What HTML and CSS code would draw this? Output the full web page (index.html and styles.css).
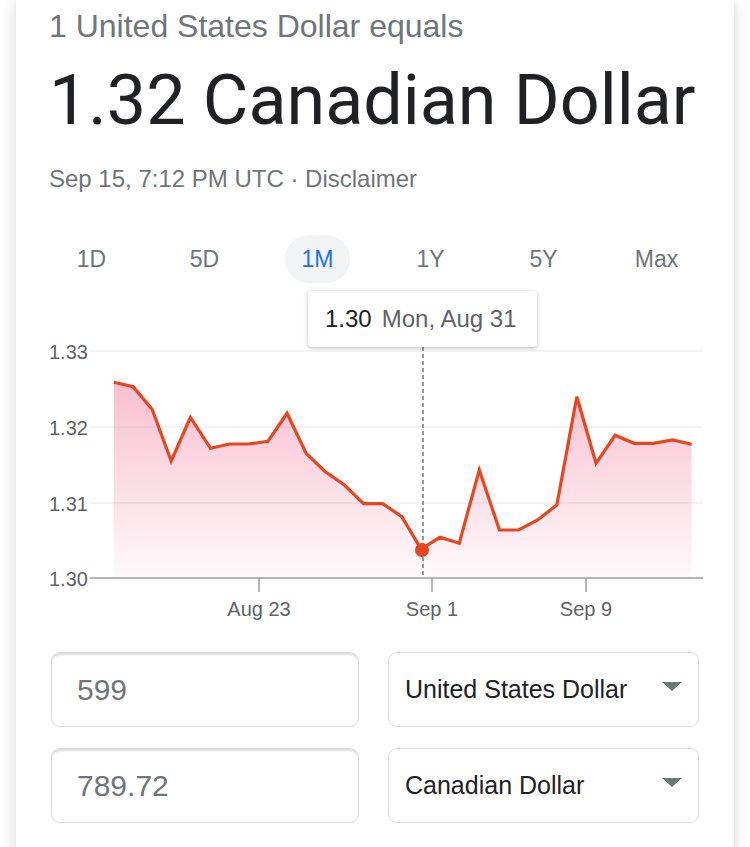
FILE: index.html
```html
<!DOCTYPE html>
<html lang="en">
<head>
    <meta charset="UTF-8">
    <meta name="viewport" content="width=device-width, initial-scale=1.0">
    <title>USD to CAD</title>
    <link rel="stylesheet" href="styles.css">
</head>
<body>
    <div class="card">
        <div class="equals">1 United States Dollar equals</div>
        <div class="rate">1.32 Canadian Dollar</div>
        <div class="updated">Sep 15, 7:12 PM UTC · Disclaimer</div>

        <!-- Range tabs -->
        <div class="tabs">
            <div class="tab"><span>1D</span></div>
            <div class="tab"><span>5D</span></div>
            <div class="tab active"><span>1M</span></div>
            <div class="tab"><span>1Y</span></div>
            <div class="tab"><span>5Y</span></div>
            <div class="tab"><span>Max</span></div>
        </div>

        <!-- Chart -->
        <div class="chart">
            <svg class="chart-svg" width="652" height="345" viewBox="49 283 652 345" overflow="visible">
                <defs>
                    <linearGradient id="fillGrad" x1="0" y1="0" x2="0" y2="1">
                        <stop offset="0" stop-color="#ec4d7c" stop-opacity="0.36"/>
                        <stop offset="1" stop-color="#ec4d7c" stop-opacity="0.03"/>
                    </linearGradient>
                </defs>

                <g class="grid">
                    <line x1="90" y1="351" x2="703" y2="351"/>
                    <line x1="90" y1="427" x2="703" y2="427"/>
                    <line x1="90" y1="503" x2="703" y2="503"/>
                </g>

                <g class="y-labels">
                    <text x="49" y="359">1.33</text>
                    <text x="49" y="435">1.32</text>
                    <text x="49" y="511">1.31</text>
                    <text x="49" y="586">1.30</text>
                </g>

                <polygon fill="url(#fillGrad)" points="113.8,382.3 133,386.7 152.1,409.3 171.2,461 190.4,417.3 210.5,448.3 229.6,444 248.7,444 267.9,441.3 287,413.3 306.1,453.3 325.3,471.7 344.4,485 363.5,503.7 382.6,503.7 401.8,516.7 421,549 440,537.3 459.2,543.3 479.3,470 499.4,530 518.5,530 537.6,520 556.8,505 576.8,396.7 596,463.3 615.1,435.3 634.2,443.3 653.4,443.3 672.5,440 691.6,444.3 691.6,578 113.8,578"/>

                <line class="cursor" x1="423" y1="347" x2="423" y2="578"/>

                <g class="axis">
                    <line x1="90" y1="578" x2="703" y2="578"/>
                    <line x1="259" y1="578" x2="259" y2="592"/>
                    <line x1="432" y1="578" x2="432" y2="592"/>
                    <line x1="586" y1="578" x2="586" y2="592"/>
                </g>

                <g class="x-labels">
                    <text x="259" y="616">Aug 23</text>
                    <text x="432" y="616">Sep 1</text>
                    <text x="586" y="616">Sep 9</text>
                </g>

                <polyline class="line" points="113.8,382.3 133,386.7 152.1,409.3 171.2,461 190.4,417.3 210.5,448.3 229.6,444 248.7,444 267.9,441.3 287,413.3 306.1,453.3 325.3,471.7 344.4,485 363.5,503.7 382.6,503.7 401.8,516.7 421,549 440,537.3 459.2,543.3 479.3,470 499.4,530 518.5,530 537.6,520 556.8,505 576.8,396.7 596,463.3 615.1,435.3 634.2,443.3 653.4,443.3 672.5,440 691.6,444.3"/>
                <circle cx="422" cy="550" r="7" fill="#e8461e"/>
            </svg>

            <div class="tooltip">
                <span class="tip-value">1.30</span>
                <span class="tip-date">Mon, Aug 31</span>
            </div>
        </div>

        <!-- Converter -->
        <div class="converter">
            <input class="amount" type="text" value="599">
            <div class="currency">
                <span>United States Dollar</span>
                <span class="caret"></span>
            </div>
            <input class="amount" type="text" value="789.72">
            <div class="currency">
                <span>Canadian Dollar</span>
                <span class="caret"></span>
            </div>
        </div>
    </div>
</body>
</html>
```

FILE: styles.css
```css
* {
    margin: 0;
    padding: 0;
    box-sizing: border-box;
}

body {
    background: #fff;
    font-family: "Liberation Sans", Arial, sans-serif;
    overflow: hidden;
}

.card {
    margin: 0 16px;
    padding: 8px 33px 40px 33px;
    background: #fff;
    min-height: 900px;
    box-shadow: 0 0 14px rgba(0, 0, 0, 0.16);
}

.equals {
    font-size: 32px;
    line-height: 36px;
    color: #70757a;
}

.rate {
    margin-top: 16px;
    font-family: Roboto, "Liberation Sans", sans-serif;
    font-size: 70px;
    line-height: 80px;
    color: #202124;
}

.updated {
    margin-top: 25px;
    font-size: 24px;
    line-height: 28px;
    color: #70757a;
}

.tabs {
    display: grid;
    grid-template-columns: repeat(6, 1fr);
    margin: 42px -12px 0 -14px;
}

.tab {
    text-align: center;
}

.tab span {
    display: inline-block;
    height: 48px;
    line-height: 48px;
    padding: 0 17px;
    border-radius: 24px;
    font-size: 23px;
    color: #70757a;
}

.tab.active span {
    background: #f1f3f4;
    color: #1a73e8;
}

.chart {
    position: relative;
    height: 345px;
}

.chart-svg {
    display: block;
}

.grid line {
    stroke: #f0f0f0;
    stroke-width: 1.5;
}

.y-labels text,
.x-labels text {
    font-family: "Liberation Sans", Arial, sans-serif;
    font-size: 20px;
    fill: #5f6368;
}

.x-labels text {
    text-anchor: middle;
}

.axis line {
    stroke: #9e9e9e;
    stroke-width: 1.5;
}

.cursor {
    stroke: #777;
    stroke-width: 1.5;
    stroke-dasharray: 4 3;
}

.line {
    fill: none;
    stroke: #e8461e;
    stroke-width: 3.2;
    stroke-linejoin: miter;
}

.tooltip {
    position: absolute;
    left: 259px;
    top: 8px;
    width: 229px;
    height: 56px;
    padding-left: 17px;
    display: flex;
    align-items: center;
    gap: 10px;
    background: #fff;
    border-radius: 4px;
    box-shadow: 0 1px 4px rgba(0, 0, 0, 0.28);
    font-size: 24px;
}

.tip-value {
    color: #202124;
}

.tip-date {
    color: #5f6368;
}

.converter {
    display: grid;
    grid-template-columns: 308px 311px;
    column-gap: 29px;
    row-gap: 21px;
    margin: 24px 2px 0 2px;
}

.amount {
    height: 75px;
    border: 1px solid #dadce0;
    border-radius: 9px;
    padding-left: 25px;
    font-family: "Liberation Sans", Arial, sans-serif;
    font-size: 30px;
    color: #70757a;
    background: #fff;
    box-shadow: inset 0 3px 2px -1px rgba(0, 0, 0, 0.14);
    outline: none;
}

.currency {
    height: 75px;
    border: 1px solid #dadce0;
    border-radius: 9px;
    padding: 0 16px;
    display: flex;
    align-items: center;
    justify-content: space-between;
    font-size: 25px;
    color: #202124;
}

.caret {
    width: 0;
    height: 0;
    border-left: 10px solid transparent;
    border-right: 10px solid transparent;
    border-top: 9px solid #70757a;
    margin-top: -6px;
}
```
